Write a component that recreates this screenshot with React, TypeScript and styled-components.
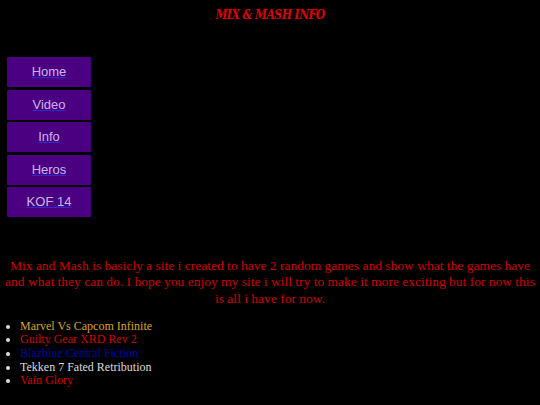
import React from 'react'
import styled, { createGlobalStyle } from 'styled-components'

const GlobalStyle = createGlobalStyle`
  html, body {
    margin: 0;
    background: #000;
  }
  body {
    font-family: 'Liberation Serif', serif;
  }
`

const Page = styled.div`
  width: 540px;
  min-height: 405px;
  background: #000;
  display: flex;
  flex-direction: column;
`

const Title = styled.h1`
  margin: 7px 0 0;
  text-align: center;
  font-family: 'DejaVu Serif Condensed', 'DejaVu Serif', serif;
  font-style: italic;
  font-weight: bold;
  font-size: 12px;
  line-height: 16px;
  color: #e00000;
  letter-spacing: -0.5px;
`

const Nav = styled.nav`
  display: flex;
  flex-direction: column;
  gap: 2.5px;
  margin: 34px 0 0 7px;
  width: 84px;
`

const NavLink = styled.a`
  display: flex;
  align-items: center;
  justify-content: center;
  height: 30px;
  padding-bottom: 1px;
  box-sizing: border-box;
  background: #4b0082;
  color: #c9b6ee;
  font-family: 'Liberation Sans', sans-serif;
  font-size: 13px;
  text-decoration: underline;
  text-decoration-color: #2a2ad0;
  border-radius: 1px;
`

const Intro = styled.p`
  margin: 41px 3px 0;
  text-align: center;
  color: #d00000;
  font-size: 13.5px;
  line-height: 16.3px;
`

const GameList = styled.ul`
  margin: 13px 0 0;
  padding-left: 20px;
  font-size: 12px;
  line-height: 13.6px;
  color: #ddd;
`

const Game = styled.li<{ $tone: string }>`
  color: ${p => p.$tone};
  &::marker {
    color: #ddd;
  }
`

const links = ['Home', 'Video', 'Info', 'Heros', 'KOF 14']

const games = [
  { name: 'Marvel Vs Capcom Infinite', tone: '#daa520' },
  { name: 'Guilty Gear XRD Rev 2', tone: '#d00000' },
  { name: 'Blazblue Central Fiction', tone: '#0000b0' },
  { name: 'Tekken 7 Fated Retribution', tone: '#dddddd' },
  { name: 'Vain Glory', tone: '#d00000' },
]

export default function App() {
  return (
    <>
      <GlobalStyle />
      <Page>
        <Title>MIX &amp; MASH INFO</Title>
        <Nav>
          {links.map(l => (
            <NavLink key={l} href="#">
              {l}
            </NavLink>
          ))}
        </Nav>
        <Intro>
          Mix and Mash is basicly a site i created to have 2 random games and show what the
          games have and what they can do. I hope you enjoy my site i will try to make it more
          exciting but for now this is all i have for now.
        </Intro>
        <GameList>
          {games.map(g => (
            <Game key={g.name} $tone={g.tone}>
              {g.name}
            </Game>
          ))}
        </GameList>
      </Page>
    </>
  )
}
